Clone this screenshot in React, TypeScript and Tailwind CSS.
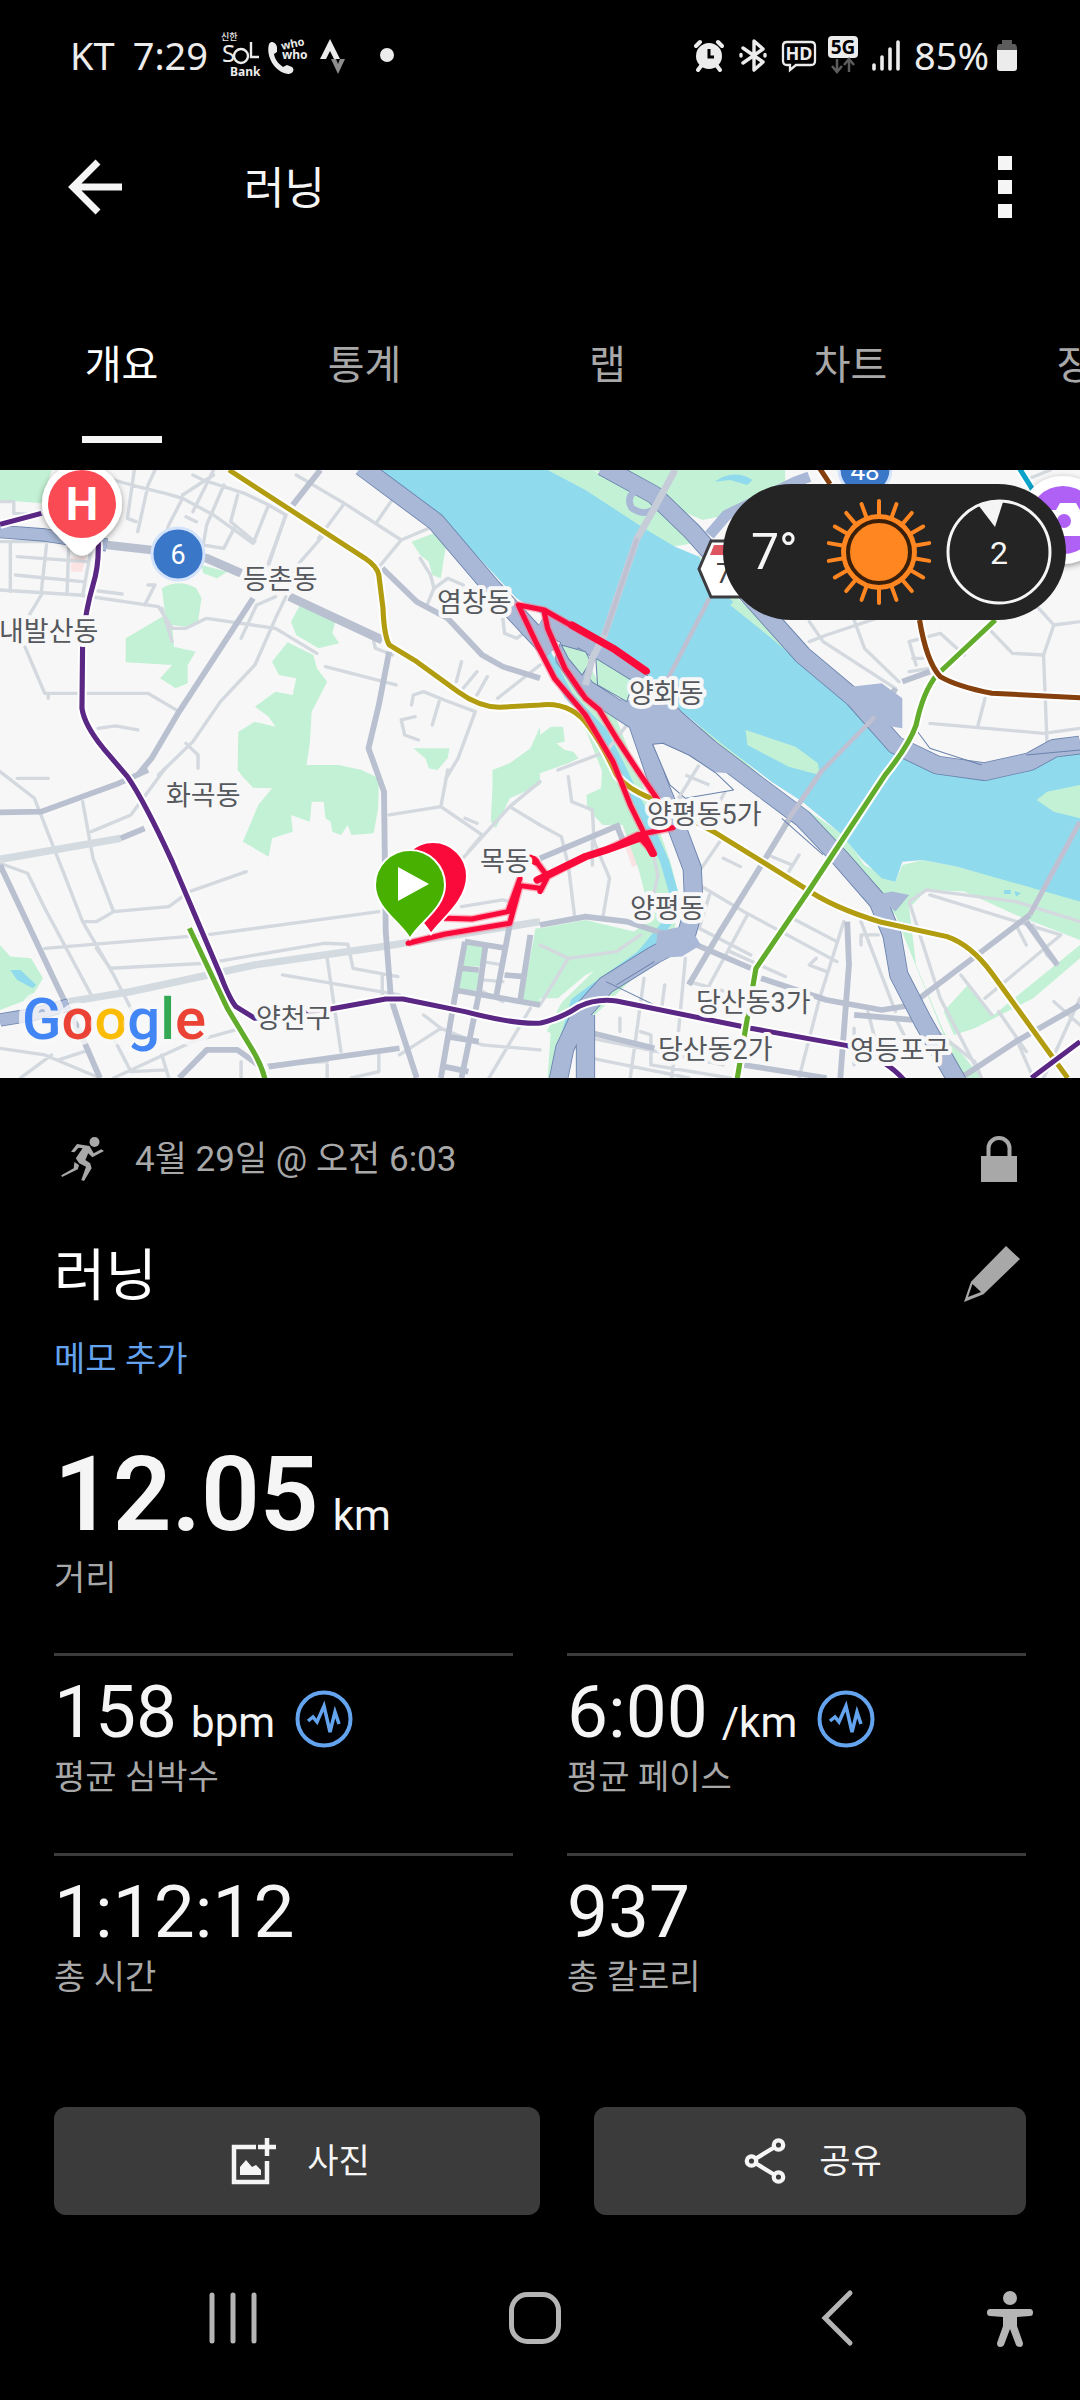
import React from "react";

const GRAY_TEXT = "text-[#a8a8a8]";

/* ---------- Status bar ---------- */

function StatusBar() {
  return (
    <header className="flex h-[110px] items-center justify-between pr-[62px] pl-[70px] font-['Noto_Sans','Noto_Sans_CJK_KR',sans-serif] text-[38px] leading-[48px] text-[#ececec]">
      <div className="flex items-center">
        <span className="mr-[18px]">KT</span>
        <span className="mr-[12px]">7:29</span>
        <svg className="h-[48px] w-[42px] overflow-visible" viewBox="0 0 42 48" fill="#ececec" aria-label="신한 SOL Bank">
          <text x="1" y="9" fontSize="9" fontWeight="500">신한</text>
          <text x="2" y="31" fontSize="24">S</text>
          <circle cx="21" cy="25" r="7" fill="none" stroke="#ececec" strokeWidth="2.4" />
          <path d="M31 11v15h8" fill="none" stroke="#ececec" strokeWidth="2.4" />
          <text x="10" y="45" fontSize="12" fontWeight="700">Bank</text>
        </svg>
        <svg className="ml-[5px] h-[48px] w-[42px] overflow-visible" viewBox="0 0 42 48" fill="#ececec" aria-label="whowho">
          <path d="M2 13c3-4 7-1 8 3l0 5-3 2c1 6 5 10 9 13l4-2 5 2c3 3 1 6-3 7C11 43-2 28 2 13z" />
          <text x="15" y="19" fontSize="11" fontWeight="700" transform="rotate(-12 15 19)">who</text>
          <text x="15" y="28" fontSize="12" fontWeight="700">who</text>
        </svg>
        <svg className="ml-[10px] h-[48px] w-[28px]" viewBox="0 0 28 48" aria-label="Strava">
          <path d="M11 8 21 28h-6l-4-8-4 8H1z" fill="#ececec" />
          <path d="M12 28h5l2 5 2-5h5l-7 15z" fill="#8d8d8d" />
        </svg>
        <span className="ml-[33px] size-[14px] rounded-full bg-[#ececec]" />
      </div>
      <div className="flex items-center">
        <svg className="h-[36px] w-[30px]" viewBox="0 0 30 36" fill="#ececec" aria-label="알람">
          <circle cx="15" cy="19" r="13" />
          <path d="M7 29l-3 4M23 29l3 4M2 9l4-4M28 9l-4-4" stroke="#ececec" strokeWidth="4" strokeLinecap="round" />
          <path d="M15 12v8h5" fill="none" stroke="#000" strokeWidth="3" />
        </svg>
        <svg className="ml-[15px] h-[36px] w-[28px]" viewBox="0 0 28 36" fill="none" stroke="#ececec" strokeWidth="3.4" strokeLinejoin="round" strokeLinecap="round" aria-label="블루투스">
          <path d="M4 11l20 14-9 8V4l9 8L4 26" />
          <path d="M2 17.500v1.500M26 17.500v1.500" />
        </svg>
        <svg className="ml-[14px] h-[36px] w-[36px] overflow-visible" viewBox="0 0 36 36" aria-label="HD">
          <path d="M6 5h24q4 0 4 4v15q0 4-4 4H15l-6 5v-5H6q-4 0-4-4V9q0-4 4-4z" fill="none" stroke="#ececec" strokeWidth="2.300" />
          <text x="18" y="23" textAnchor="middle" fontSize="18" fontWeight="700" fill="#ececec">HD</text>
        </svg>
        <svg className="ml-[10px] h-[40px] w-[32px] overflow-visible" viewBox="0 0 32 40" aria-label="5G">
          <rect x="1" y="1" width="30" height="22" rx="4" fill="#ececec" />
          <text x="16" y="19" textAnchor="middle" fontSize="19" fontWeight="700" fill="#000">5G</text>
          <path d="M10 24v13M5 31l5 6 5-6M22 37V25M17 30l5-6 5 6" fill="none" stroke="#5c5c5c" strokeWidth="2.500" />
        </svg>
        <svg className="ml-[12px] h-[36px] w-[30px]" viewBox="0 0 30 36" stroke="#ececec" strokeWidth="3.600" strokeLinecap="round" aria-label="신호">
          <path d="M3 28v4M11 20v12M19 12v20M27 5v27" />
        </svg>
        <span className="ml-[13px]">85%</span>
        <svg className="ml-[7px] h-[34px] w-[22px]" viewBox="0 0 22 34" aria-label="배터리">
          <path d="M6 2h10v4h3q2 1 2 4v3H1v-3q0-3 2-4h3z" fill="#5c5c5c" />
          <path d="M1 12h20v18q0 3-3 3H4q-3 0-3-3z" fill="#ececec" />
        </svg>
      </div>
    </header>
  );
}

/* ---------- Title and tabs ---------- */

function TitleBar() {
  return (
    <div className="flex h-[154px] items-center px-[68px]">
      <button type="button" aria-label="뒤로">
        <svg className="h-[56px] w-[54px]" viewBox="0 0 54 56" fill="none" stroke="#f5f5f5" strokeWidth="7">
          <path d="M30 3 5 28l25 25M5 28h49" />
        </svg>
      </button>
      <h1 className="ml-[122px] flex-1 pt-[4px] text-[44px] leading-[56px] text-[#f5f5f5]">러닝</h1>
      <button type="button" aria-label="메뉴" className="flex flex-col gap-[10px]">
        <span className="size-[14px] bg-[#f5f5f5]" />
        <span className="size-[14px] bg-[#f5f5f5]" />
        <span className="size-[14px] bg-[#f5f5f5]" />
      </button>
    </div>
  );
}

const TABS = ["개요", "통계", "랩", "차트", "장비"];

function Tabs() {
  return (
    <div role="tablist" className="flex overflow-hidden">
      {TABS.map((tab, i) => (
        <button
          key={tab}
          type="button"
          role="tab"
          aria-selected={i === 0}
          className="flex h-[206px] w-[22.5%] shrink-0 flex-col items-center justify-end pb-[27px] text-[40px] leading-[56px] text-[#a8a8a8] aria-selected:text-white"
        >
          <span className="mb-[42px]">{tab}</span>
          <span className={i === 0 ? "h-[7px] w-[80px] bg-[#f5f5f5]" : "h-[7px] w-[80px]"} />
        </button>
      ))}
    </div>
  );
}

/* ---------- Map ---------- */

const PARKS = [
  "M0 15H150L120 115 0 105z",
  "M470 370Q520 340 570 370L585 400 575 470 540 485 500 480 505 545 568 560 545 600 545 655 510 670 465 640 500 600 365 592 365 520 480 450z",
  "M585 300 660 320 630 340 590 325z",
  "M870 422 975 465 965 505 985 535 925 550 860 510 845 470z",
  "M835 532 910 570 920 610 950 650 905 740 900 830 890 900 985 900 1050 915 1100 940 1098 1030 1085 1105 1020 1110 1010 1080 990 1110 965 1100 960 1070 945 1060 940 1010 905 1010 900 1070 845 1050 850 1100 790 1120 780 1175 705 1130 750 1020 790 970 735 968 705 935 690 915 692 800 740 770 800 785 780 755 740 725 800 680 850 690 860 640 810 630 790 590z",
  "M1195 230 1260 205 1295 240 1280 340 1255 330 1245 290 1220 270z",
  "M1200 850 1305 850 1300 880 1270 915 1245 910 1235 880z",
  "M1568 785 1540 850 1480 895 1430 915 1430 960 1425 1070 1440 1090 1480 1000 1568 960z",
  "M0 1440 30 1475 90 1480 125 1540 90 1600 0 1635z",
  "M1350 1435h55v70h-60zM1340 1512h50v65h-60z",
  "M1555 1390 1568 1390V1620L1515 1610z",
  "M1568 1390 1700 1365 1840 1400 1900 1370 1850 1460 1700 1530 1620 1600 1568 1600z",
  "M1568 810 1600 785 1635 785 1640 830 1615 835 1640 855 1665 860 1680 880 1650 895 1568 925z",
  "M1750 890 1800 915 1870 1080 1750 1080 1705 1030 1703 990 1745 970z",
  "M1590 15H1720L1860 90 2040 230 1950 245 1780 140 1620 60z",
  "M1720 15H2280V70L2160 140 2040 165 1940 120 1860 60z",
  "M2030 270 2140 400 2520 760 2640 880 2600 860 2120 420 2030 340z",
  "M1950 730 2100 830 2250 970 2450 1110 2510 1200 2600 1250 2620 1200 2680 1185 2780 1205 2980 1260 3136 1300V1425L2950 1350 2800 1280 2690 1275 2640 1330 2660 1500 2740 1700 2850 1839H2790L2600 1350 2400 1150 2000 800z",
  "M3136 1480 3000 1600 2830 1690 2770 1710 2740 1640 2810 1560 2885 1650 3136 1440z",
  "M1600 1690 1660 1690 1640 1839 1590 1839z",
];

const WATER =
  "M1085 15H1590L1700 75 1870 190 1960 245 2030 275 2060 350 2140 420 2400 640 2520 755 2640 870 2720 915 2880 935 3000 905 3136 850V1310L3000 1270 2780 1205 2680 1185 2620 1190 2600 1250 2560 1240 2500 1180 2440 1105 2330 1010 2240 950 2100 840 1980 740 1870 640 1740 540 1650 490 1568 445 1500 400 1280 155z";

const MINOR_ROADS = [
  "M0 110H40V145L120 150M330 45 400 65 480 85 530 100 620 150 735 235 780 120 830 150 760 350M530 100 490 180 470 240M560 30 590 45 710 85 780 120M450 15 430 60 400 200M390 15 370 160 395 170M620 30 530 90M690 90 670 170 740 230M650 60 600 180 590 240 650 250 680 190M540 155 570 170M620 15 560 140",
  "M0 230H200M30 230V380M45 330 240 350M50 275 250 290M135 240 120 380M200 230 195 380M265 250 240 390M0 375 230 390 460 425 500 490 540 490 600 460 800 490 920 565M120 390 85 450M285 378 355 387M430 360H450L420 420M70 540 130 685H430L520 740M140 700V685M285 790 335 783 400 795M470 430 500 530",
  "M830 150 780 300M940 210 830 340M800 395 745 420 700 520M830 395 800 460 740 600 640 710 560 830 460 930M860 30 1000 115 1165 225 1105 300M1000 115 925 220M1135 110 1095 170M1165 225 1245 190M1240 420 1260 370 1300 340 1345 360M1220 280 1250 330 1260 370M1460 460 1465 505 1500 520 1540 490M1568 600 1445 700M1385 620 1345 670M1415 635 1385 690M1340 590 1325 650M1195 720 1200 690 1230 680 1290 705 1380 740 1330 880 1295 940M1275 710 1255 780M1205 755 1165 765 1175 810 1215 825M540 835 575 870V910M945 605 1150 660M1085 530 1090 550 1140 570",
  "M0 920 100 1000 240 1370 330 1530 390 1650M50 940H140M480 910 380 1050 265 1100M240 1010 270 1180 330 1340 280 1370 240 1370M280 1450 320 1510 600 1495 940 1435 1010 1438 1025 1510 1155 1535M330 1340 490 1325 550 1280 715 1220M130 1450 600 1410 1100 1340M0 1195 80 1225 130 1330 270 1600M0 1750 130 1770 290 1839M150 1770 60 1839M170 1785 260 1755M330 1720 380 1820 480 1815M330 1839 560 1730 700 1690M470 1770 490 1839M820 1530 1160 1590M950 1480 990 1760M1110 1530V1600M700 1790V1839M780 1800 950 1790M950 1800V1839M1100 1770V1820L1020 1839M1280 1690 1160 1770M1230 1650 1280 1690 1400 1740 1568 1755M1540 1630 1420 1839",
  "M1130 1050 1280 1025 1400 1110 1360 1160M1280 1025 1300 915M1350 1060 1385 1075M1480 1025 1568 1080M1568 950 1480 1025 1300 1230M1340 1325 1460 1305 1480 1310M1400 1490 1460 1500M1400 1545 1460 1550M1400 1580 1460 1610",
  "M1568 1080 1630 1115 1650 1200 1668 1350M1650 935 1660 1010 1720 1035 1725 1130 1770 1240 1750 1360M1720 1130 1720 1200M1860 1090 1895 1160 1910 1230 1890 1330M1568 1440 1650 1480 1790 1460 1860 1410M1568 1620 1650 1480M1820 780 1760 860 1620 915M1990 930 2060 960M2030 900 1970 1010M2110 970 2060 1070M2030 1260 2160 1340 2430 1490M2100 1180 2150 1205M2230 1170 2300 1200M2090 1130 2030 1220M2320 1170 2290 1220M2170 1350 2060 1560M2060 1290 2030 1390 2180 1470M2120 1460 2280 1535M2450 1370 2380 1600 2320 1839M2370 1480 2350 1500 2400 1520M2310 1365 2430 1430M2500 1370 2600 1640M2550 1410H2500V1440M1990 1480 1970 1700 1950 1839M1870 1540 1830 1839M1720 1720 2100 1800M1720 1780 2000 1839M1930 1560 1920 1640M2000 1550 2180 1600M1860 1700 1890 1710V1800L2120 1839M2480 1690V1800M2520 1640 2540 1720M2600 1660 2640 1740M1800 1660V1700",
  "M2350 530 2400 510 2560 455M2480 465 2510 550 2610 650M2350 470 2390 530 2600 670M2640 620 2700 610M2660 600 2640 530 2730 505 2800 570M2650 580H2680M2870 490 2940 565 3030 570 3040 830M3030 570 3060 480 3136 470M2990 400 3060 480M2700 775 3030 805 3136 790M2860 700 2840 780M2990 40 3050 15M3030 300 3136 200",
  "M2690 1275 2640 1310 2730 1600 2850 1839M2690 1275 2950 1310 3136 1370M2700 1290 3080 1410 2860 1600M3000 1380 3040 1470 3070 1500M2950 1380 2980 1440M2790 1530 2880 1650M3060 1610 3136 1680M2900 1640 2980 1760M2720 1700 2830 1790 2850 1839M2950 1720 3000 1839M3030 1840 3136 1600",
];

const MAIN_ROADS = [
  "M310 240 440 255 600 280 700 325M840 395 1110 525M735 400 520 740 440 880 400 930",
  "M1130 560 1100 720 1070 850 1115 980 1120 1400 1135 1600 1210 1839",
  "M1110 310 1210 410 1300 460 1400 570 1460 605 1568 640",
  "M930 15 850 120",
  "M0 1042 120 1040 345 955 430 915M350 1120 420 1090",
  "M0 1200 160 1550 240 1720 290 1839",
  "M520 1839 600 1755 690 1755 750 1800M780 1805 1160 1750",
  "M1350 1430 1320 1600 1280 1839M1350 1430 1470 1450M1410 1440 1390 1590 1340 1839M1480 1380 1440 1600M1540 1410 1510 1610M1320 1575 1568 1620M1300 1715 1390 1730M1290 1805 1360 1820M1340 1510 1390 1515M1465 1530 1520 1535",
  "M1568 1380 1700 1355 1820 1370 1940 1410M2000 1430 2180 1510M2210 1540 2400 1605 2560 1635 2650 1620M1700 1700 1900 1750",
  "M2290 1065 2208 1205 2088 1405 2000 1560M2460 1370 2465 1500 2440 1839M2160 1800 2400 1839M2480 1650 2650 1665",
  "M2990 1350 2850 1460 2670 1600M2980 1370 3070 1500M3136 1620 2950 1730 2790 1839",
  "M1800 1080 1568 1180M1790 1080 1810 1130",
  "M2600 670 2560 750M2620 650 2700 620",
];

const HIGHWAYS = [
  "M1050 5 1265 170 1430 370 1510 460 1600 560",
  "M1570 470 1660 520 1640 580 1700 670 1850 770 1880 860 1910 950 1970 1100 2010 1210 2015 1330 1990 1420",
  "M1580 460 1700 530 1860 650 1960 760 2060 850 2200 960 2330 1060 2440 1180 2550 1310 2590 1410 2610 1530 2680 1670 2780 1850",
  "M1990 1420 1900 1470 1760 1560 1690 1640 1640 1750 1620 1850M1700 1650 1700 1850",
  "M1750 5 1900 90 2010 200 2070 270 2200 420 2330 570 2480 700 2600 840 2720 900 2860 920 2990 890 3060 850 3136 840",
];

const METRO = {
  gold: "M665 15 1060 280Q1095 305 1100 330L1112 430Q1115 510 1130 540L1210 590 1330 680Q1390 725 1450 727L1568 720Q1660 710 1710 785 1750 840 1790 930 1820 970 1890 1000L2080 1105 2330 1265Q2420 1330 2560 1372L2750 1415Q2820 1440 2880 1525L3100 1839",
  purple:
    "M0 178 120 145M285 230Q288 300 270 360 250 430 240 520L238 730Q245 780 300 850L370 935Q420 1010 500 1190L640 1530Q665 1600 685 1625L740 1660 960 1632 1120 1602H1170L1350 1640Q1500 1680 1570 1674 1630 1660 1680 1625 1730 1600 1790 1608L2180 1690 2460 1742Q2570 1780 2625 1845M3136 1730 2995 1839",
  green:
    "M550 1390 660 1630 730 1750Q760 1800 770 1845M2890 465 2720 630Q2680 680 2660 780 2640 840 2570 930L2350 1275 2195 1510 2165 1690 2140 1845",
  brown: "M2380 10 2410 57M2670 465Q2690 590 2730 635 2780 665 2880 685L3136 698",
  blue: "M2960 10 3005 85",
};

const ROUTE =
  "M1185 1435 1290 1408 1480 1375 1510 1262M1290 1360 1370 1362 1475 1340 1510 1240M1510 1262 1568 1270M1550 1180 1590 1235 1700 1175 1760 1155 1850 1110 1955 1088M1590 1235 1568 1280M1900 1168 1830 1020 1780 890 1700 750 1610 640 1560 540 1505 420 1580 435 1690 500 1780 550 1880 620M1580 440 1590 490 1640 610 1700 700 1740 735 1790 820 1860 930 1910 1005M1850 1110 1890 1155";

const ROUTE_OVERLAP = "M1540 1180 1555 1190M1560 1245 1700 1175 1760 1155 1870 1115 1895 1165M1660 480 1780 550 1875 618";

const LABELS: [string, number, number][] = [
  ["내발산동", -1, 171],
  ["등촌동", 243, 119],
  ["염창동", 437, 142],
  ["양화동", 629, 233],
  ["화곡동", 166, 335],
  ["목동", 480, 401],
  ["양천구", 256, 558],
  ["양평동5가", 647, 354],
  ["양평동", 630, 448],
  ["당산동3가", 696, 542],
  ["당산동2가", 658, 589],
  ["영등포구", 850, 590],
];

function MetroLine({ d, color }: { d: string; color: string }) {
  return (
    <>
      <path d={d} stroke="#fff" strokeWidth="27" />
      <path d={d} stroke={color} strokeWidth="15" />
    </>
  );
}

function MapDrawing() {
  return (
    <svg className="block h-auto w-full" viewBox="0 0 1080 608" role="img" aria-label="러닝 경로 지도">
      <defs>
        <filter id="shadow" x="-30%" y="-30%" width="160%" height="160%">
          <feDropShadow dx="0" dy="2" stdDeviation="3" floodOpacity="0.4" />
        </filter>
      </defs>
      <rect width="1080" height="608" fill="#f7f7f7" />
      <g transform="scale(.3444 .3333) translate(0 -15)" fill="none" strokeLinejoin="round">
        <path d="M205 275 250 275 240 320 207 320zM1815 1145 1850 1140 1880 1195 1835 1205z" fill="#fbe3e3" />
        {PARKS.map((d) => (
          <path key={d} d={d} fill="#c3f1d5" />
        ))}
        <path d="M1640 560 1750 790 1830 1000 1900 1200 1925 1300 1910 1400 1780 1530 1670 1640 1630 1720" stroke="#c3f1d5" strokeWidth="95" />
        <path d={WATER} fill="#90daee" />
        <path d="M1575 540 1650 690 1750 800 1800 900 1870 1050 1930 1190 1955 1280 1940 1370 1860 1470 1750 1550 1670 1610 1640 1720" stroke="#90daee" strokeWidth="26" />
        <path d="M2075 50Q2130 10 2185 45L2170 60 2120 45zM30 1515 60 1515 105 1560 95 1570 50 1545z" fill="#90daee" />
        <path d="M2165 795 2310 845 2375 895 2380 930 2290 905 2170 840zM3136 960 3040 980 3010 1005 3060 1040 3136 1060z" fill="#c3f1d5" />
        <path d="M2140 400 2260 500 2400 625 2535 745 2515 760 2380 645 2240 520 2120 420z" fill="#c3f1d5" />
        <path d="M2915 1275h20v12h-20zM2945 1278 2965 1285 2950 1295z" fill="#90daee" />
        {MINOR_ROADS.map((d) => (
          <path key={d} d={d} stroke="#d3d9df" strokeWidth="10" strokeLinecap="round" />
        ))}
        <path d="M0 1183 350 1120M200 1610 380 1580 740 1500 1110 1445 1568 1370" stroke="#d3dbe0" strokeWidth="22" />
        {MAIN_ROADS.map((d) => (
          <path key={d} d={d} stroke="#b9c0d0" strokeWidth="17" />
        ))}
        <path d="M310 240 440 255 600 280 700 325M840 395 1110 525" stroke="#b9c0d0" strokeWidth="26" />
        <path d="M0 200 130 210 310 240M0 1665 90 1650 200 1620" stroke="#6a82ad" strokeWidth="40" />
        <path d="M0 200 130 210 310 240M0 1665 90 1650 200 1620" stroke="#a9b9d7" strokeWidth="35" />
        {HIGHWAYS.map((d) => (
          <path key={d} d={d} stroke="#6a82ad" strokeWidth="56" />
        ))}
        {HIGHWAYS.map((d) => (
          <path key={d} d={d} stroke="#a9b8d6" strokeWidth="51" />
        ))}
        <path d="M1800 700 1960 735 2040 840 2170 930 1900 905 1850 810z" fill="#a9b8d6" />
        <path d="M1910 1400 2000 1380 2035 1440 1980 1475 1900 1480zM2470 665 2560 655 2620 700 2620 790 2560 780zM2540 1290 2590 1280 2640 1290 2600 1340" fill="#a9b8d6" />
        <path d="M1895 838 1925 835 2000 870 2080 925 2130 975 1990 1000 1945 960z" fill="#f7f7f7" stroke="#6a82ad" strokeWidth="3" />
        <path d="M1990 930 2060 960M2030 900 1970 1000" stroke="#d3d9df" strokeWidth="10" />
        <path d="M1630 540 1700 560 1715 590 1690 630 1650 580zM1730 580 1840 650 1820 710 1735 660z" fill="#c3f1d5" stroke="#6a82ad" strokeWidth="3" />
        <path d="M1870 60Q1810 90 1835 130 1880 160 1910 120" stroke="#a9b8d6" strokeWidth="20" />
        <path d="M2060 210 2110 150 2310 50 2350 35" stroke="#a9b8d6" strokeWidth="32" />
        <path d="M1960 15 1900 130 1850 220 1755 510 1720 580 1700 660" stroke="#c6cdd9" strokeWidth="20" />
        <path d="M1850 220 1755 510M2060 400 1940 640M2540 755 2380 925" stroke="#bfc0d2" strokeWidth="13" />
        <path d="M2388 915 2288 1065M3136 1070 2990 1350" stroke="#bfc0d2" strokeWidth="15" />
        <path d="M1960 1650 1760 1550M1790 1560 1900 1490M2270 1060 2390 1170M2650 780 2700 850 2850 900M2980 870 3136 855" stroke="#6a82ad" strokeWidth="3" />
        <MetroLine d={METRO.gold} color="#b29d10" />
        <MetroLine d={METRO.purple} color="#5a2785" />
        <MetroLine d={METRO.green} color="#62ac2c" />
        <MetroLine d={METRO.brown} color="#85400e" />
        <MetroLine d={METRO.blue} color="#0aa3c9" />
        <path d={ROUTE} stroke="#ff6d88" strokeOpacity=".5" strokeWidth="23" />
        <path d={ROUTE} stroke="#fa0a3a" strokeWidth="15" strokeLinecap="round" />
        <path d={ROUTE_OVERLAP} stroke="#fa0a3a" strokeWidth="22" strokeLinecap="round" />
      </g>

      {/* Road numbers */}
      <circle cx="178" cy="84" r="26" fill="#3a77c8" stroke="#d3e3fb" strokeWidth="3" />
      <text x="178" y="94" textAnchor="middle" fontSize="27" fill="#fff">6</text>
      <circle cx="865" cy="-1" r="26" fill="#3a77c8" stroke="#d3e3fb" strokeWidth="3" />
      <text x="865" y="10" textAnchor="middle" fontSize="26" fill="#fff">48</text>
      <path d="M711 71H760V127H711L699 99z" fill="#fff" stroke="#3c3c40" strokeWidth="3" />
      <path d="M714 75H750V85H710z" fill="#dd5560" />
      <text x="716" y="113" fontSize="27" fill="#444">7</text>

      {/* Places */}
      <g filter="url(#shadow)">
        <path d="M82-7a40 40 0 0 1 40 41c0 22-18 32-30 47q-10 9-20 0C60 66 42 56 42 34A40 40 0 0 1 82-7z" fill="#fff" />
        <circle cx="1063" cy="50" r="44" fill="#fff" />
      </g>
      <circle cx="82" cy="34" r="34" fill="#fa4b55" />
      <text x="82" y="50" textAnchor="middle" fontSize="46" fontWeight="700" fill="#fff">H</text>
      <circle cx="1063" cy="50" r="34" fill="#b061f5" />
      <path d="M1048 40h8l4-7h16l4 7v26h-32z" fill="#fff" />
      <circle cx="1064" cy="51" r="7" fill="#b061f5" />

      <g fontSize="27" fill="#55585c" stroke="#f7f7f7" strokeWidth="8" strokeLinejoin="round" paintOrder="stroke">
        {LABELS.map(([name, x, y]) => (
          <text key={name} x={x} y={y}>{name}</text>
        ))}
      </g>

      {/* Start and finish */}
      <g stroke="#fff" strokeWidth="2">
        <path d="M431 464c-8-14-32-32-32-58a34 34 0 0 1 68 0c0 26-27 44-36 58z" fill="#fa0a3a" />
        <path d="M410 469c-8-16-35-30-35-54a35 35 0 0 1 70 0c0 24-27 38-35 54z" fill="#48b000" />
      </g>
      <path d="M398 397v34l31-17z" fill="#fff" />

      <text x="22" y="569" fontSize="58" fontWeight="500" stroke="#f7f7f7" strokeOpacity=".8" strokeWidth="12" strokeLinejoin="round" paintOrder="stroke">
        <tspan fill="#4285f4">G</tspan>
        <tspan fill="#ea4335">o</tspan>
        <tspan fill="#fbbc05">o</tspan>
        <tspan fill="#4285f4">g</tspan>
        <tspan fill="#34a853">l</tspan>
        <tspan fill="#ea4335">e</tspan>
      </text>
    </svg>
  );
}

const RAYS = Array.from({ length: 18 }, (_, i) => i * 20);

function Weather() {
  return (
    <div className="absolute top-[14px] right-[14px] flex h-[136px] w-[343px] items-center rounded-full bg-[#242424] pl-[28px] text-[#f5f5f5]">
      <span className="w-[75px] text-[50px] leading-[60px]">7°</span>
      <svg className="size-[106px]" viewBox="-53 -53 106 106" aria-label="맑음">
        {RAYS.map((angle) => (
          <path key={angle} d="M0-37V-51" transform={`rotate(${angle})`} stroke="#ff8620" strokeWidth="4" strokeLinecap="round" />
        ))}
        <circle r="38" fill="#ff8620" />
        <circle r="31" fill="#ff8620" stroke="#3a1f0a" strokeWidth="4" />
      </svg>
      <svg className="ml-[14px] size-[106px]" viewBox="-53 -53 106 106" aria-label="풍속">
        <circle r="51" fill="none" stroke="#f5f5f5" strokeWidth="3" />
        <path d="M-20-46Q-8-53 4-50L-4-25z" fill="#f5f5f5" />
        <text y="12" textAnchor="middle" fontSize="32" fill="#f5f5f5">2</text>
      </svg>
    </div>
  );
}

/* ---------- Activity details ---------- */

function ChartBadge() {
  return (
    <button type="button" aria-label="차트 보기" className="mt-[12px] ml-[20px]">
      <svg className="size-[58px]" viewBox="0 0 58 58" fill="none" stroke="#64a4ef">
        <circle cx="29" cy="29" r="26.500" strokeWidth="4" />
        <path d="M13 31 18 27 22 32 29 16 35 42 40 22 44 34" strokeWidth="3.500" />
      </svg>
    </button>
  );
}

type Stat = { value: string; unit?: string; label: string };

const STATS: Stat[] = [
  { value: "158", unit: "bpm", label: "평균 심박수" },
  { value: "6:00", unit: "/km", label: "평균 페이스" },
  { value: "1:12:12", label: "총 시간" },
  { value: "937", label: "총 칼로리" },
];

function StatCell({ value, unit, label }: Stat) {
  return (
    <div className="flex flex-col-reverse border-t-[3px] border-[#3c3c3c] pt-[20px] pb-[56px]">
      <dt className={`mt-[8px] text-[34px] leading-[40px] ${GRAY_TEXT}`}>{label}</dt>
      <dd className="flex h-[73px] items-center text-[#f5f5f5]">
        <span className="text-[73px] leading-[73px]">
          {value}
          {unit && <span className="ml-[14px] text-[42px] leading-[42px]">{unit}</span>}
        </span>
        {unit && <ChartBadge />}
      </dd>
    </div>
  );
}

function Details() {
  return (
    <section className="px-[54px] pt-[58px]">
      <div className={`flex h-[46px] items-center pr-[8px] pl-[7px] ${GRAY_TEXT}`}>
        <svg className="h-[45px] w-[44px]" viewBox="0 0 44 45" fill="currentColor" aria-hidden="true">
          <circle cx="33.500" cy="5" r="5" />
          <path d="M28.500 9 16 7 10 14.700 13.400 15.300 17.500 10.700 21.600 11.300 14.800 21.300 18.200 26.300 25 29.700 20.300 43 23 44 30.600 31.300 29.200 26.300 24.400 23 27.200 16.300 31.300 20.300 43 14 40.200 12.300 32.700 16.300z" />
          <path d="M13.400 25 12.700 31.300.3 38.300 1 40 16.800 32.300 18 28z" />
        </svg>
        <p className="ml-[30px] flex-1 pt-[2px] text-[35px] leading-[46px]">4월 29일 @ 오전 6:03</p>
        <svg className="h-[46px] w-[38px]" viewBox="0 0 38 46" fill="currentColor" aria-label="비공개">
          <path d="M1 20H37V46H1z" />
          <path d="M8.500 22V12a10.500 10 0 0 1 21 0V22" fill="none" stroke="currentColor" strokeWidth="4" />
        </svg>
      </div>

      <div className="mt-[62px] flex items-center justify-between pr-[6px]">
        <h2 className="pt-[4px] text-[56px] leading-[56px] text-white">러닝</h2>
        <button type="button" aria-label="이름 편집" className={GRAY_TEXT}>
          <svg className="size-[56px]" viewBox="0 0 56 56" fill="currentColor">
            <path fillRule="evenodd" d="M42 0 56 13 19.500 48.300 0 56 7 35.700zM8.500 38 17 46 4 51z" />
          </svg>
        </button>
      </div>

      <a href="#memo" className="mt-[35px] block w-fit text-[34px] leading-[40px] text-[#64a4ef]">메모 추가</a>

      <dl className="mt-[64px] flex flex-col-reverse">
        <dt className={`mt-[11px] text-[34px] leading-[40px] ${GRAY_TEXT}`}>거리</dt>
        <dd className="flex h-[104px] items-baseline gap-[14px] text-[#f5f5f5]">
          <span className="text-[103px] leading-[104px] font-semibold">12.05</span>
          <span className="text-[42px] leading-[42px]">km</span>
        </dd>
      </dl>

      <dl className="mt-[55px] grid grid-cols-2 gap-x-[54px]">
        {STATS.map((stat) => (
          <StatCell key={stat.label} {...stat} />
        ))}
      </dl>

      <div className="mt-[54px] grid grid-cols-[9fr_8fr] gap-[54px] text-[34px] leading-[48px] text-[#f5f5f5]">
        <button type="button" className="flex h-[108px] items-center justify-center gap-[29px] rounded-xl bg-[#3b3b3b] pl-[6px]">
          <svg className="size-[48px]" viewBox="0 0 48 48" fill="none" stroke="#f5f5f5" strokeWidth="4.500" aria-hidden="true">
            <path d="M26 10H4V45H37V24" />
            <path d="M37 1V19M28 10H46" />
            <path d="M10 38V30L16 23 22 30 26 28 31 33V38z" fill="#f5f5f5" stroke="none" />
          </svg>
          사진
        </button>
        <button type="button" className="flex h-[108px] items-center justify-center gap-[33px] rounded-xl bg-[#3b3b3b] pl-[6px]">
          <svg className="h-[48px] w-[42px]" viewBox="0 0 42 48" fill="none" stroke="#f5f5f5" strokeWidth="4.300" aria-hidden="true">
            <circle cx="7.500" cy="24" r="4.700" />
            <circle cx="34.500" cy="8" r="4.700" />
            <circle cx="34.500" cy="40" r="4.700" />
            <path d="M12 21.500 30 10.500M12 26.500 30 37.500" />
          </svg>
          공유
        </button>
      </div>
    </section>
  );
}

/* ---------- System navigation ---------- */

function NavBar() {
  return (
    <nav className="mt-[71px] flex items-center pr-[3.5%] pb-[50px] pl-[18.6%] text-[#b5b5b5]">
      <div className="flex flex-1 justify-between">
        <button type="button" aria-label="최근 앱">
          <svg className="size-[64px]" viewBox="0 0 64 64" stroke="currentColor" strokeWidth="5" strokeLinecap="round">
            <path d="M11 9V55M32 9V55M53 9V55" />
          </svg>
        </button>
        <button type="button" aria-label="홈">
          <svg className="size-[64px]" viewBox="0 0 64 64" fill="none" stroke="currentColor" strokeWidth="5">
            <rect x="8.500" y="8.500" width="47" height="47" rx="16" />
          </svg>
        </button>
        <button type="button" aria-label="이전">
          <svg className="size-[64px]" viewBox="0 0 64 64" fill="none" stroke="currentColor" strokeWidth="5" strokeLinecap="round">
            <path d="M45 7 20 32 45 57" />
          </svg>
        </button>
      </div>
      <button type="button" aria-label="접근성" className="ml-[13%]">
        <svg className="size-[64px]" viewBox="0 0 64 64" fill="currentColor">
          <circle cx="32" cy="12" r="7" />
          <path d="M12 23H52q3 0 3 3.500T52 30L39 31V40L45 57q0 4-3 4t-4-2L32 43 26 59q-1 2-4 2t-3-4L25 40V31L12 30q-3 0-3-3.500T12 23z" />
        </svg>
      </button>
    </nav>
  );
}

export default function App() {
  return (
    <main className="min-h-screen bg-black font-[Roboto,'Noto_Sans_CJK_KR',sans-serif]">
      <StatusBar />
      <TitleBar />
      <Tabs />
      <div className="relative overflow-hidden">
        <MapDrawing />
        <Weather />
      </div>
      <Details />
      <NavBar />
    </main>
  );
}
